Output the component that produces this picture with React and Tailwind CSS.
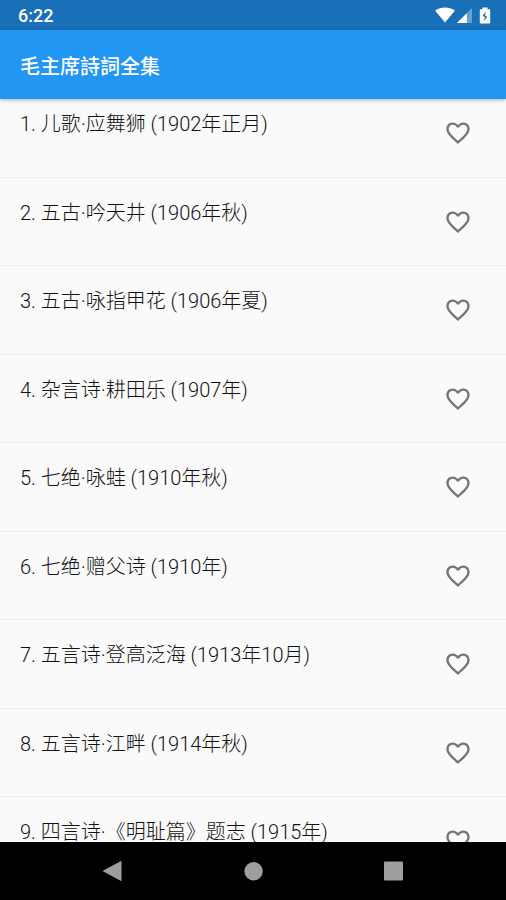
import { useState } from 'react'

const poems = [
  '儿歌·应舞狮 (1902年正月)',
  '五古·吟天井 (1906年秋)',
  '五古·咏指甲花 (1906年夏)',
  '杂言诗·耕田乐 (1907年)',
  '七绝·咏蛙 (1910年秋)',
  '七绝·赠父诗 (1910年)',
  '五言诗·登高泛海 (1913年10月)',
  '五言诗·江畔 (1914年秋)',
  '四言诗·《明耻篇》题志 (1915年)',
]

function StatusBar() {
  return (
    <div className="h-[30px] shrink-0 flex items-center justify-between bg-[#1a70b8] pl-[18px] pr-3 text-white">
      <span className="text-[18px] leading-5 font-medium pt-0.5">6:22</span>
      <div className="flex items-center gap-0.5">
        <svg width="20" height="16" viewBox="0 0 20 16" fill="currentColor" aria-hidden="true">
          <path d="M10 15.5 0.2 3.8C3 1.6 6.3 0.5 10 0.5s7 1.1 9.8 3.3z" />
        </svg>
        <svg width="15" height="15" viewBox="0 0 15 15" fill="currentColor" aria-hidden="true">
          <path d="M0 15 15 0v15z" opacity="0.35" />
          <path d="M0 15 9.8 5.2v9.8z" />
        </svg>
        <svg className="ml-0.5" width="18" height="17" viewBox="0 0 18 17" aria-hidden="true">
          <path fill="currentColor" d="M6.5 0.5h5v1.7h1.7c.6 0 1 .4 1 1v12.3c0 .6-.4 1-1 1H4.8c-.6 0-1-.4-1-1V3.2c0-.6.4-1 1-1h1.7z" />
          <path fill="#1a70b8" d="M10.3 4.6 6.6 8.6 9 10.3l-1.6 4 3.9-4.4-2.5-1.7z" />
        </svg>
      </div>
    </div>
  )
}

function PoemRow({ number, title }) {
  const [liked, setLiked] = useState(false)

  return (
    <li className="flex items-start justify-between border-b border-[#eeeeee] pl-5 pr-[34px] pt-[23px]">
      <span className="text-[20px] leading-6 font-light text-[#111111] [text-spacing-trim:space-all]">{number}. {title}</span>
      <button
        type="button"
        aria-label={`收藏 ${title}`}
        aria-pressed={liked}
        onClick={() => setLiked(!liked)}
        className="mt-[7px] shrink-0 text-[#757575]"
      >
        <svg width="28" height="28" viewBox="0 0 24 24" fill="currentColor" aria-hidden="true">
          {liked ? (
            <path d="M12 21.35l-1.45-1.32C5.4 15.36 2 12.28 2 8.5 2 5.42 4.42 3 7.5 3c1.74 0 3.41.81 4.5 2.09C13.09 3.81 14.76 3 16.5 3 19.58 3 22 5.42 22 8.5c0 3.78-3.4 6.86-8.55 11.54z" />
          ) : (
            <path d="M16.5 3c-1.74 0-3.41.81-4.5 2.09C10.91 3.81 9.24 3 7.5 3 4.42 3 2 5.42 2 8.5c0 3.78 3.4 6.86 8.55 11.54L12 21.35l1.45-1.32C18.6 15.36 22 12.28 22 8.5 22 5.42 19.58 3 16.5 3zm-4.4 15.55l-.1.1-.1-.1C7.14 14.24 4 11.39 4 8.5 4 6.5 5.5 5 7.5 5c1.54 0 3.04.99 3.57 2.36h1.87C13.46 5.99 14.96 5 16.5 5c2 0 3.5 1.5 3.5 3.5 0 2.89-3.14 5.74-7.9 10.05z" />
          )}
        </svg>
      </button>
    </li>
  )
}

function NavBar() {
  return (
    <nav className="h-[58px] shrink-0 flex items-center justify-center gap-28 bg-black text-[#9e9e9e]">
      <button type="button" aria-label="返回">
        <svg width="28" height="28" viewBox="0 0 28 28" fill="currentColor" aria-hidden="true">
          <path d="M3.5 14 22.5 3.8v20.4z" />
        </svg>
      </button>
      <button type="button" aria-label="主页">
        <svg width="28" height="28" viewBox="0 0 28 28" fill="currentColor" aria-hidden="true">
          <circle cx="14.6" cy="14.2" r="9.2" />
        </svg>
      </button>
      <button type="button" aria-label="最近">
        <svg width="28" height="28" viewBox="0 0 28 28" fill="currentColor" aria-hidden="true">
          <rect x="5" y="4.6" width="19" height="19" rx="1" />
        </svg>
      </button>
    </nav>
  )
}

export default function App() {
  return (
    <div className="h-screen flex flex-col bg-[#fafafa] font-['Roboto','Noto_Sans_CJK_SC',sans-serif]">
      <StatusBar />
      <header className="relative z-10 h-[69px] shrink-0 flex items-center bg-[#2196f3] px-5 pt-1 shadow-[0_1px_4px_rgba(0,0,0,0.3)]">
        <h1 className="text-[20px] leading-6 font-medium text-white">毛主席詩詞全集</h1>
      </header>
      <main className="flex-1 min-h-0 overflow-hidden">
        {/* list is scrolled slightly under the app bar */}
        <ul className="-mt-[10px] grid auto-rows-fr min-h-[797px]">
          {poems.map((title, i) => (
            <PoemRow key={title} number={i + 1} title={title} />
          ))}
        </ul>
      </main>
      <NavBar />
    </div>
  )
}
